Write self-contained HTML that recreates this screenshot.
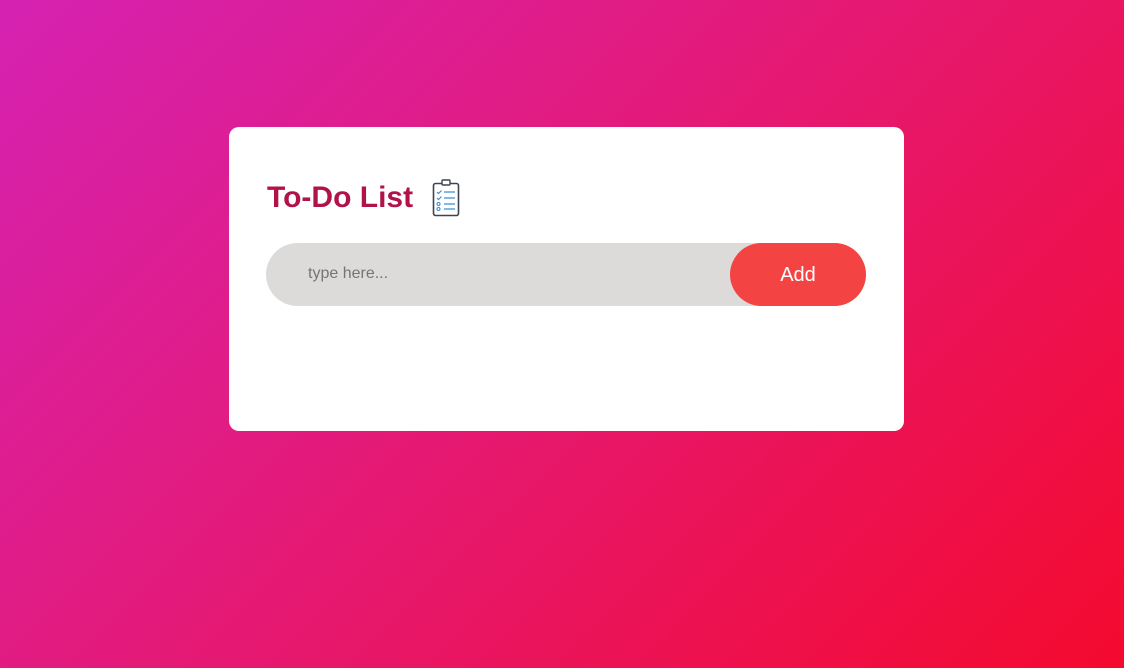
<!DOCTYPE html>
<html><head><meta charset="utf-8"><style>
html,body{margin:0;width:1124px;height:668px;overflow:hidden}
body{background:linear-gradient(135deg,#d522b2 0%,#e41a78 45%,#f40a2e 100%);font-family:"Liberation Sans",Arial,sans-serif}
.card{position:absolute;left:229px;top:127px;width:675px;height:304px;background:#fff;border-radius:10px}
h2{position:absolute;left:38px;top:53px;margin:0;font-size:30px;font-weight:bold;color:#b0124a;line-height:36px}
svg{position:absolute;left:203px;top:52px}
.row{position:absolute;left:37px;top:116px;width:600px;height:63px;background:#dcdbd9;border-radius:32px}
.row span{position:absolute;left:42px;top:22px;font-size:16px;color:#757575}
.btn{position:absolute;right:0;top:0;width:136px;height:63px;background:#f44343;border-radius:32px;color:#fff;font-size:20px;text-align:center;line-height:65px}
</style></head><body>
<div class="card">
<h2>To-Do List</h2>
<svg width="28" height="38" viewBox="0 0 28 38" fill="none">
<rect x="1.5" y="4.5" width="25" height="32" rx="2" stroke="#3c4552" stroke-width="1.6"/>
<rect x="10" y="1" width="8" height="5" rx="1" stroke="#3c4552" stroke-width="1.4" fill="#fff"/>
<path d="M5 13l1.5 1.5 3-3M5 19l1.5 1.5 3-3" stroke="#3a8fd8" stroke-width="1.2"/>
<circle cx="6.5" cy="25" r="1.5" stroke="#3a8fd8" stroke-width="1.1"/>
<circle cx="6.5" cy="30" r="1.5" stroke="#3a8fd8" stroke-width="1.1"/>
<path d="M12 13h11M12 19h11M12 25h11M12 30h11" stroke="#3a8fd8" stroke-width="1.2"/>
</svg>
<div class="row"><span>type here...</span><div class="btn">Add</div></div>
</div>
</body></html>
